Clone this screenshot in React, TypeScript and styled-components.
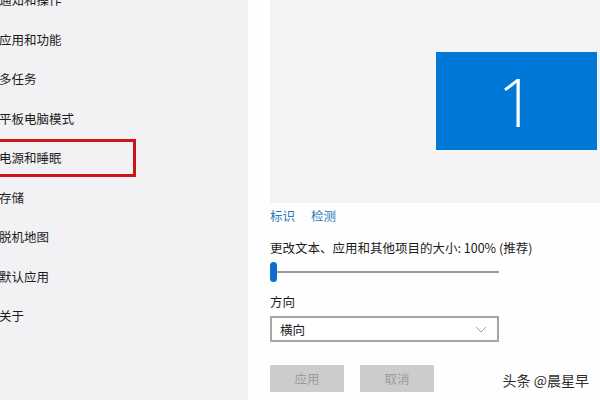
import React from "react";
import styled, { createGlobalStyle } from "styled-components";

const Global = createGlobalStyle`
  html, body { margin: 0; padding: 0; }
  body {
    width: 600px; height: 400px; overflow: hidden; background: #ffffff;
    font-family: "Noto Sans CJK SC", "Noto Sans", sans-serif;
  }
`;

const Page = styled.div`
  position: relative;
  display: flex;
  width: 600px;
  height: 400px;
  overflow: hidden;
`;

const Nav = styled.nav`
  width: 248px;
  flex: none;
  background: #f2f1f4;
  overflow: hidden;
`;

const NavList = styled.ul`
  list-style: none;
  margin: -20px 0 0 0;
  padding: 0;
`;

const NavItem = styled.li<{ $marked?: boolean }>`
  position: relative;
  height: 39.5px;
  display: flex;
  align-items: center;
  padding-left: 0;
  margin-left: -1px;
  font-size: 12.5px;
  color: #1c1c1c;
  &::after {
    content: "";
    display: ${(p) => (p.$marked ? "block" : "none")};
    position: absolute;
    left: -10px;
    width: 147px;
    top: 1px;
    bottom: 1px;
    border: 3px solid #d0121b;
    box-sizing: border-box;
  }
`;

const Main = styled.main`
  flex: 1;
  padding-left: 22px;
  display: flex;
  flex-direction: column;
  background: #fefefe;
`;

const Preview = styled.div`
  height: 203px;
  background: #f3f2f5;
  padding: 52px 0 0 166px;
  box-sizing: border-box;
`;

const Monitor = styled.div`
  width: 161px;
  height: 98px;
  background: #0078d7;
  color: #ffffff;
  display: flex;
  align-items: center;
  justify-content: center;
  font-family: "Open Sans", "Noto Sans", sans-serif;
  font-weight: 300;
  font-size: 66px;
  line-height: 1;
`;

const Links = styled.div`
  margin-top: 5px;
  display: flex;
  gap: 16px;
  line-height: 16px;
`;

const Link = styled.span`
  font-size: 12.5px;
  color: #2b78b8;
`;

const Label = styled.div`
  font-size: 12.5px;
  line-height: 16px;
  color: #1c1c1c;
  margin-top: ${(p: { $mt: number }) => p.$mt}px;
`;

const Slider = styled.div`
  position: relative;
  margin-top: 6px;
  width: 229px;
  height: 20px;
  display: flex;
  align-items: center;
`;

const Track = styled.div`
  flex: 1;
  height: 2px;
  background: #9a9a9a;
  margin-left: 2px;
`;

const Thumb = styled.div`
  position: absolute;
  left: 0;
  top: 0;
  width: 7px;
  height: 20px;
  border-radius: 4px;
  background: #0a6fcd;
`;

const Select = styled.div`
  margin-top: 6px;
  width: 229px;
  height: 26px;
  box-sizing: border-box;
  border: 2px solid #a6a6a6;
  display: flex;
  align-items: center;
  justify-content: space-between;
  padding: 0 10px 0 8px;
  font-size: 12.5px;
  color: #1c1c1c;
  background: #ffffff;
`;

const Buttons = styled.div`
  margin-top: 23px;
  display: flex;
  gap: 16px;
`;

const Button = styled.div`
  width: 74px;
  height: 27px;
  background: #cccccc;
  color: #9c9c9c;
  font-size: 12.5px;
  display: flex;
  align-items: center;
  justify-content: center;
`;

const Watermark = styled.div`
  position: absolute;
  right: 11px;
  bottom: 10px;
  font-size: 14px;
  line-height: 20px;
  color: #2e2e2e;
  text-shadow: 0 0 2px #ffffff, 0 0 2px #ffffff;
`;

const navItems = [
  "通知和操作",
  "应用和功能",
  "多任务",
  "平板电脑模式",
  "电源和睡眠",
  "存储",
  "脱机地图",
  "默认应用",
  "关于",
];

export default function App() {
  return (
    <>
      <Global />
      <Page>
        <Nav>
          <NavList>
            {navItems.map((t) => (
              <NavItem key={t} $marked={t === "电源和睡眠"}>
                {t}
              </NavItem>
            ))}
          </NavList>
        </Nav>
        <Main>
          <Preview>
            <Monitor>1</Monitor>
          </Preview>
          <Links>
            <Link>标识</Link>
            <Link>检测</Link>
          </Links>
          <Label $mt={16}>更改文本、应用和其他项目的大小: 100% (推荐)</Label>
          <Slider>
            <Track />
            <Thumb />
          </Slider>
          <Label $mt={12}>方向</Label>
          <Select>
            <span>横向</span>
            <svg width="12" height="7" viewBox="0 0 12 7">
              <path d="M1 1 L6 6 L11 1" fill="none" stroke="#a0a0a0" strokeWidth="1" />
            </svg>
          </Select>
          <Buttons>
            <Button>应用</Button>
            <Button>取消</Button>
          </Buttons>
        </Main>
        <Watermark>头条 @晨星早</Watermark>
      </Page>
    </>
  );
}
